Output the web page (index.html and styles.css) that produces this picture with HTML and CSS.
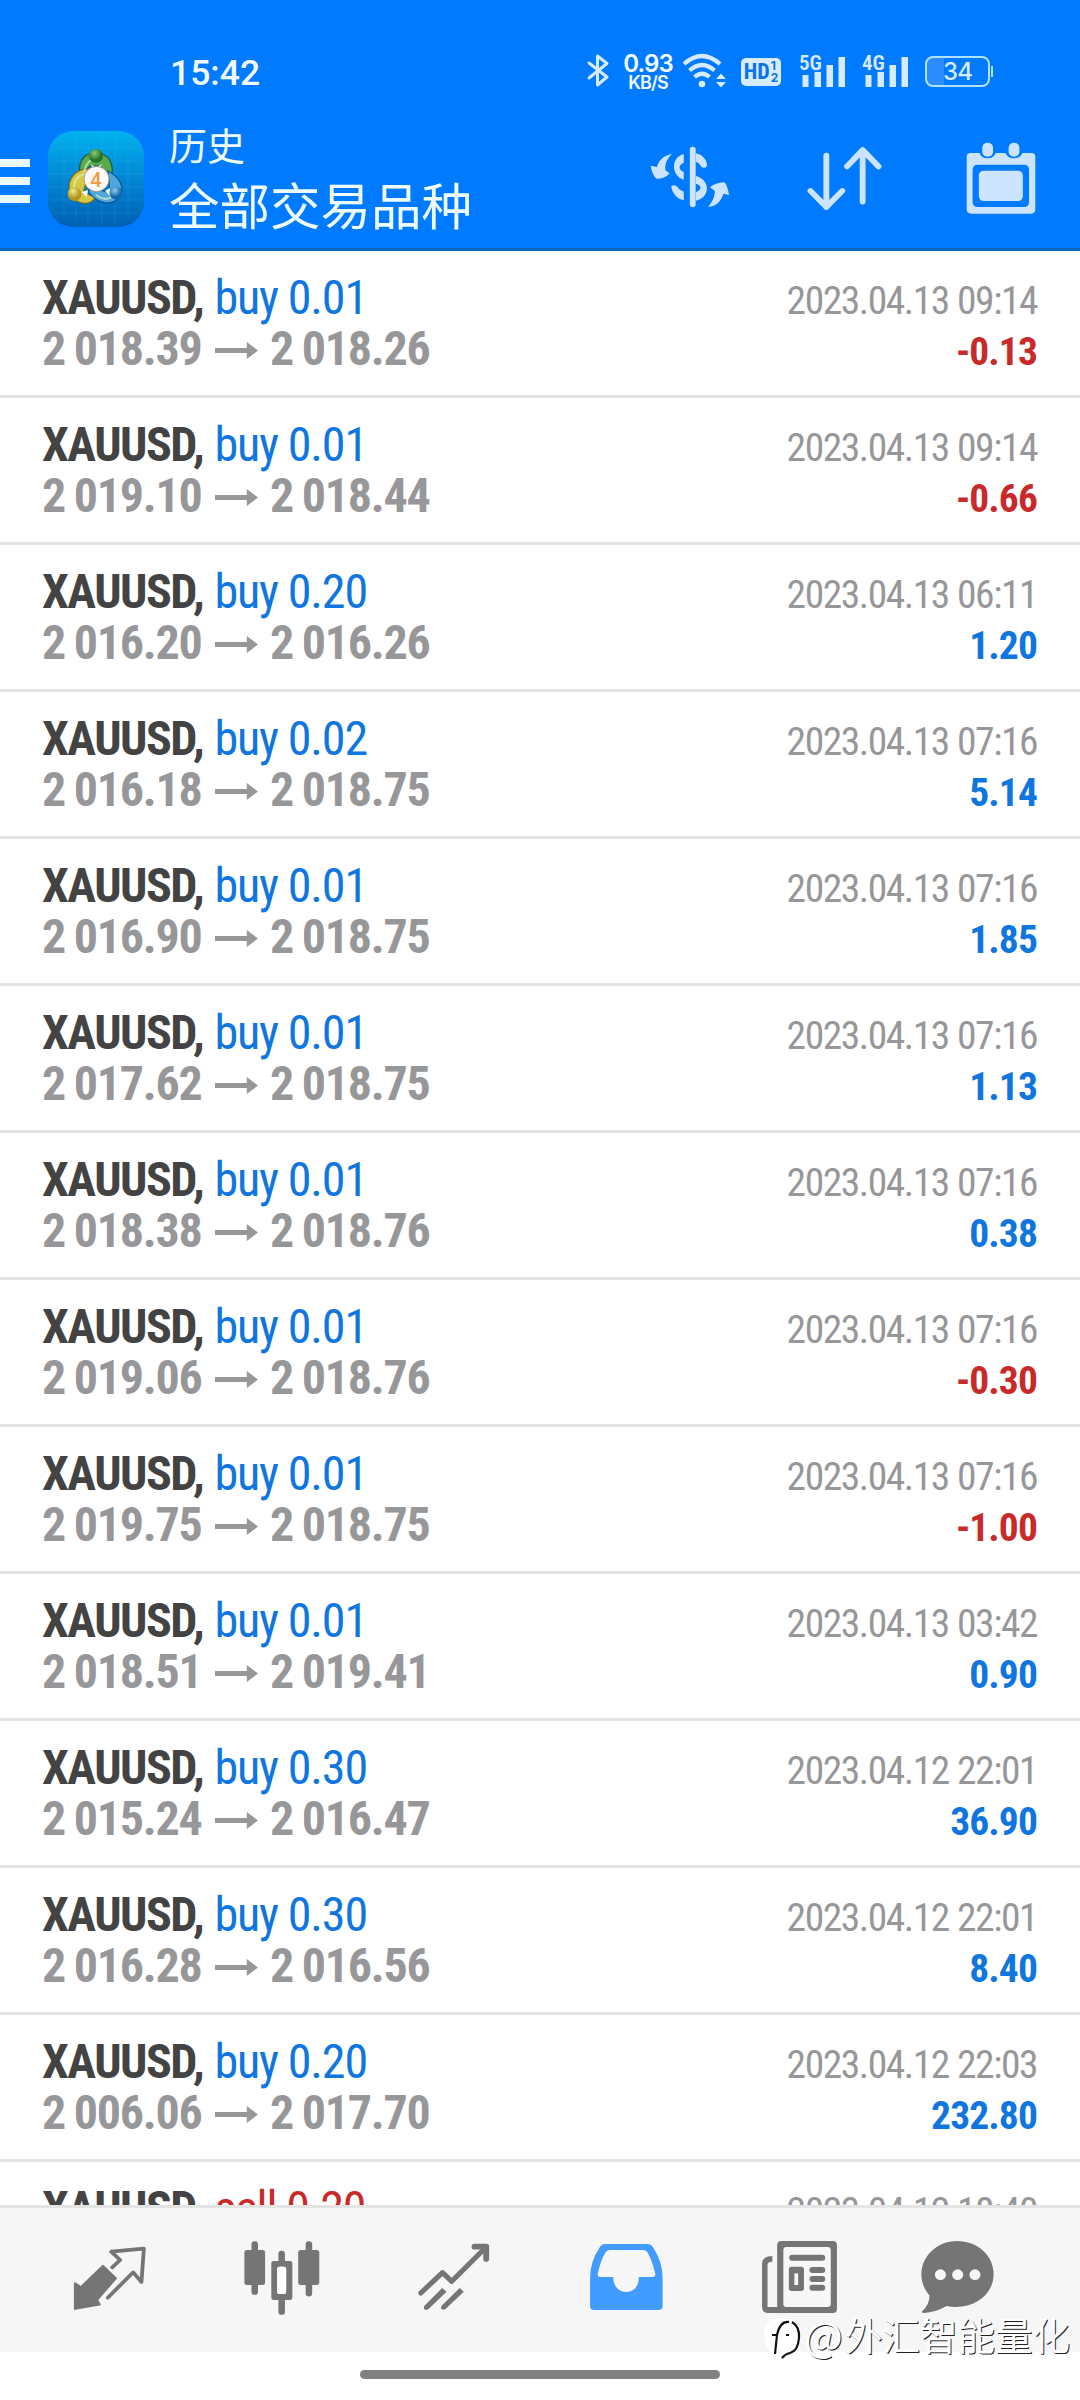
FILE: index.html
```html
<!DOCTYPE html>
<html lang="zh-CN">
<head>
<meta charset="utf-8">
<title>历史</title>
<link rel="stylesheet" href="styles.css">
</head>
<body>
<div class="screen">
  <header class="header">
    <div class="status">
      <span class="clock">15:42</span>
      <svg class="bt" viewBox="0 0 22 33"><path d="M2 9 20 23 10.500 31V2L20 9.500 2 24" /></svg>
      <div class="speed"><span>0.93</span><small>KB/S</small></div>
      <svg class="wifi" viewBox="0 0 46 34"><path d="M2 10Q20 -6 38 10M7.500 16.500Q20 5.500 32.500 16.500M12.500 23Q20 16.500 27.500 23"/><circle cx="20" cy="30" r="3.300"/><path class="solid" d="M39 19.500 44 25H34ZM34 28H44L39 33.500Z"/></svg>
      <div class="hd"><b>HD</b><span><i>1</i><i>2</i></span></div>
      <div class="signal"><b>5G</b><svg viewBox="0 0 47 32"><path d="M3.500 20h6v12h-6zM15.500 17h6.500v15h-6.500zM27.500 10h6.500v22h-6.500zM39.500 2h6.500v30h-6.500z"/></svg></div>
      <div class="signal second"><b>4G</b><svg viewBox="0 0 47 32"><path d="M3.500 20h6v12h-6zM15.500 17h6.500v15h-6.500zM27.500 10h6.500v22h-6.500zM39.500 2h6.500v30h-6.500z"/></svg></div>
      <div class="battery"><span>34</span></div>
      <i class="battery-tip"></i>
    </div>
    <div class="toolbar">
      <div class="burger"><i></i><i></i><i></i></div>
      <svg class="logo" viewBox="0 0 96 96">
        <defs>
          <linearGradient id="sky" x1="0" y1="0" x2="0" y2="1"><stop offset="0" stop-color="#00b2ef"/><stop offset=".5" stop-color="#0286d4"/><stop offset="1" stop-color="#0060b2"/></linearGradient>
          <radialGradient id="green" cx=".4" cy=".3"><stop offset="0" stop-color="#8fc66b"/><stop offset="1" stop-color="#24752f"/></radialGradient>
          <radialGradient id="gold" cx=".4" cy=".3"><stop offset="0" stop-color="#f6e88a"/><stop offset="1" stop-color="#b0951c"/></radialGradient>
          <radialGradient id="blue" cx=".4" cy=".3"><stop offset="0" stop-color="#8fccf2"/><stop offset="1" stop-color="#1668ae"/></radialGradient>
        </defs>
        <rect width="96" height="96" rx="25" fill="url(#sky)"/>
        <path d="M16 10V86M28 4V92M40 0V96M54 0V96M67 3V93M80 9V87M6 17H90M2 30H94M0 43H96M0 56H96M2 69H94M6 82H90" stroke="#5cc8f5" stroke-opacity=".15"/>
        <g stroke-width="1.200">
          <path d="M32 44C29 24 42 22 48 22C61 22 67 34 63 46C62 52 58 54 55 50L53 35L42 35Z" fill="#5aa94f" stroke="#195a38"/>
          <path d="M42 38C28 37 21 47 21 57C23 69 33 75 43 71L49 66L35 62Z" fill="#d8c840" stroke="#706c28"/>
          <path d="M60 40C72 46 78 58 71 67C62 76 48 72 40 60L45 57L62 62Z" fill="#4fa7de" stroke="#0c508c"/>
          <path d="M36 41Q39 28 49 27M26 56Q27 44 38 43M48 64Q60 73 69 61" fill="none" stroke="#d8efbf" stroke-opacity=".7" stroke-width="2"/>
          <path d="m43 33 5 4 6-4-3 7h-6zM33 61l7-2-1 7zM62 57l-5 3 5 5z" fill="#f3f6ee"/>
          <circle cx="48" cy="25" r="7" fill="url(#green)"/><circle cx="26.500" cy="63" r="7" fill="url(#gold)"/><circle cx="68" cy="62" r="6.500" fill="url(#blue)"/>
          <circle cx="48.500" cy="48" r="12.500" fill="#fdfaf8" stroke="#9a8a78" stroke-width=".8"/>
        </g>
        <text x="48" y="55.500" class="four">4</text>
      </svg>
      <div class="titles"><div class="sub">历史</div><div class="main">全部交易品种</div></div>
      <svg class="swap" viewBox="320 318 232 186" preserveAspectRatio="none">
        <path class="ln" d="M444 329V493" stroke-width="17"/>
        <path d="M418 342V368C402 374 402 389 418 396V419C381 408 379 352 418 342ZM381 440Q390 431 400 441Q405 451 418 455V481Q389 474 381 440ZM453 340Q478 344 485 371Q487 384 476 383Q467 382 465 374Q461 367 453 366ZM453 408C495 419 497 472 453 482V456C471 449 471 436 453 431Z"/>
        <path d="M383 342C366 360 363 376 365 391L377 400Q362 418 339 416Q326 405 322 377L340 381C345 362 359 346 383 342ZM488 500C506 482 508 462 508 453L494 442Q508 428 536 427Q545 437 549 465L533 461C526 483 513 500 488 500Z"/>
      </svg>
      <svg class="sort" viewBox="780 318 217 194" preserveAspectRatio="none"><path class="ln" d="M836 347V500M790 452 836 500 882 452M941 484V330M896 379 941 330 987 379" stroke-width="17"/></svg>
      <svg class="cal" viewBox="1241 306 202 216" preserveAspectRatio="none"><path fill-rule="evenodd" d="M1243 350Q1243 339 1254 339H1280Q1285 355 1303 355Q1321 355 1327 339H1355Q1361 355 1379 355Q1397 355 1404 339H1430Q1441 339 1441 350V508Q1441 521 1428 521H1256Q1243 521 1243 508ZM1276 374Q1260 374 1260 390V486Q1260 501 1276 501H1408Q1423 501 1423 486V390Q1423 374 1408 374Z"/><rect x="1278" y="392" width="127" height="91" rx="14"/><rect x="1288" y="308" width="31" height="42" rx="15"/><rect x="1364" y="308" width="31" height="42" rx="15"/></svg>
    </div>
  </header>
  <main class="list">
    <div class="deal"><div class="line"><b>XAUUSD,</b><span class="op">buy 0.01</span><time>2023.04.13 09:14</time></div><div class="line price"><span>2 018.39</span><i class="arrow"></i><span>2 018.26</span><strong class="neg">-0.13</strong></div></div>
    <div class="deal"><div class="line"><b>XAUUSD,</b><span class="op">buy 0.01</span><time>2023.04.13 09:14</time></div><div class="line price"><span>2 019.10</span><i class="arrow"></i><span>2 018.44</span><strong class="neg">-0.66</strong></div></div>
    <div class="deal"><div class="line"><b>XAUUSD,</b><span class="op">buy 0.20</span><time>2023.04.13 06:11</time></div><div class="line price"><span>2 016.20</span><i class="arrow"></i><span>2 016.26</span><strong>1.20</strong></div></div>
    <div class="deal"><div class="line"><b>XAUUSD,</b><span class="op">buy 0.02</span><time>2023.04.13 07:16</time></div><div class="line price"><span>2 016.18</span><i class="arrow"></i><span>2 018.75</span><strong>5.14</strong></div></div>
    <div class="deal"><div class="line"><b>XAUUSD,</b><span class="op">buy 0.01</span><time>2023.04.13 07:16</time></div><div class="line price"><span>2 016.90</span><i class="arrow"></i><span>2 018.75</span><strong>1.85</strong></div></div>
    <div class="deal"><div class="line"><b>XAUUSD,</b><span class="op">buy 0.01</span><time>2023.04.13 07:16</time></div><div class="line price"><span>2 017.62</span><i class="arrow"></i><span>2 018.75</span><strong>1.13</strong></div></div>
    <div class="deal"><div class="line"><b>XAUUSD,</b><span class="op">buy 0.01</span><time>2023.04.13 07:16</time></div><div class="line price"><span>2 018.38</span><i class="arrow"></i><span>2 018.76</span><strong>0.38</strong></div></div>
    <div class="deal"><div class="line"><b>XAUUSD,</b><span class="op">buy 0.01</span><time>2023.04.13 07:16</time></div><div class="line price"><span>2 019.06</span><i class="arrow"></i><span>2 018.76</span><strong class="neg">-0.30</strong></div></div>
    <div class="deal"><div class="line"><b>XAUUSD,</b><span class="op">buy 0.01</span><time>2023.04.13 07:16</time></div><div class="line price"><span>2 019.75</span><i class="arrow"></i><span>2 018.75</span><strong class="neg">-1.00</strong></div></div>
    <div class="deal"><div class="line"><b>XAUUSD,</b><span class="op">buy 0.01</span><time>2023.04.13 03:42</time></div><div class="line price"><span>2 018.51</span><i class="arrow"></i><span>2 019.41</span><strong>0.90</strong></div></div>
    <div class="deal"><div class="line"><b>XAUUSD,</b><span class="op">buy 0.30</span><time>2023.04.12 22:01</time></div><div class="line price"><span>2 015.24</span><i class="arrow"></i><span>2 016.47</span><strong>36.90</strong></div></div>
    <div class="deal"><div class="line"><b>XAUUSD,</b><span class="op">buy 0.30</span><time>2023.04.12 22:01</time></div><div class="line price"><span>2 016.28</span><i class="arrow"></i><span>2 016.56</span><strong>8.40</strong></div></div>
    <div class="deal"><div class="line"><b>XAUUSD,</b><span class="op">buy 0.20</span><time>2023.04.12 22:03</time></div><div class="line price"><span>2 006.06</span><i class="arrow"></i><span>2 017.70</span><strong>232.80</strong></div></div>
    <div class="deal"><div class="line"><b>XAUUSD,</b><span class="op sell">sell 0.20</span><time>2023.04.12 18:40</time></div></div>
  </main>
  <nav class="nav">
    <svg style="width:76px" viewBox="210 300 221 225" preserveAspectRatio="none"><path d="M300 378 337 415 282 480 290 493 219 506V430L236 442Z" stroke="#757575" stroke-width="7" stroke-linejoin="round"/><path class="ln" d="M327 382 350 360 324 335 419 326 412 426 388 397 314 473" stroke-width="11"/></svg>
    <svg style="width:78px" viewBox="705 300 226 225" preserveAspectRatio="none"><rect x="709" y="330" width="60" height="105" rx="7"/><rect x="865" y="330" width="61" height="105" rx="7"/><path class="ln" d="M739 313V455M896 313V460M817 342V365M817 480V515" stroke-width="19"/><path fill-rule="evenodd" d="M794 363H841Q848 363 848 370V473Q848 480 841 480H794Q787 480 787 473V370Q787 363 794 363ZM804 387V455Q804 462 811 462H823Q830 462 830 455V387Q830 380 823 380H811Q804 380 804 387Z"/><rect x="804" y="380" width="26" height="82" rx="6" fill="#fff"/></svg>
    <svg style="width:74px" viewBox="1210 300 215 225" preserveAspectRatio="none"><path class="ln" d="M1221 459 1284 398 1311 424 1409 323" stroke-width="15"/><path class="ln" d="M1377 320H1411V357" stroke-width="17"/><path d="M1231 498 1283 444 1296 455 1243 508Q1235 512 1230 506ZM1281 498 1334 444 1346 455 1292 508Q1284 512 1279 505Z"/></svg>
    <svg style="width:76px" viewBox="140 300 220 225" preserveAspectRatio="none"><path fill="#429bff" d="M190 312H312Q322 312 328 322Q356 365 356 415V498Q356 510 344 510H158Q146 510 146 498V415Q146 365 174 322Q180 312 190 312Z"/><path fill="#f7f7f7" d="M203 330H300Q309 330 313 338Q325 360 335 401Q336 410 328 411H287C290 471 212 471 213 411H176Q167 410 168 401Q177 360 190 338Q194 330 203 330Z"/></svg>
    <svg style="width:79px" viewBox="640 300 230 225" preserveAspectRatio="none"><path d="M690 510V315Q690 303 702 303H852Q864 303 864 315V507Q864 519 852 519H664Q646 519 646 501V372Q646 348 676 348V365Q662 365 662 374V501H690Z"/><rect x="708" y="321" width="138" height="180" rx="9" fill="#f7f7f7"/><path class="ln" d="M734 353H821M793 390H821M793 417H821M793 443H821" stroke-width="18"/><rect x="724" y="380" width="44" height="73" rx="8"/><path fill="#f7f7f7" d="M740 400h11v35h-11z"/></svg>
    <svg style="width:75px" viewBox="1105 300 217 225" preserveAspectRatio="none"><path d="M1213 303C1270 303 1318 345 1318 402C1318 470 1252 512 1182 498Q1150 517 1116 519Q1108 519 1112 513Q1134 491 1132 466C1077 398 1127 303 1213 303Z"/><g fill="#f7f7f7"><circle cx="1164" cy="404" r="16"/><circle cx="1214" cy="404" r="16"/><circle cx="1264" cy="404" r="16"/></g></svg>
  </nav>
  <div class="gesture"><i></i></div>
  <div class="watermark">
    <svg viewBox="0 0 40 46"><path fill="#fff" d="M1 14Q4 3 19 3Q38 4 38 20Q38 36 25 43L14 42Q0 35 1 14Z"/><path d="M9 20H14Q17 6 26 7M14 20 12 39M29 7Q37 12 36 23Q35 36 27 38Q22 39 19 43M23 20h3" /></svg><span class="at">@</span><span>外汇智能量化</span>
  </div>
</div>
</body>
</html>
```
FILE: styles.css
```css
* { box-sizing: border-box; }
body { margin: 0; background: #fff; }
i { font-style: normal; display: block; }
svg { display: block; flex: none; overflow: visible; }
.screen { position: relative; width: 1080px; height: 2400px; overflow: hidden; display: flex; flex-direction: column; font-family: "Roboto Condensed", Roboto, "Noto Sans CJK SC", sans-serif; }

.header { height: 251px; background: #007aff; border-bottom: 3px solid #1168c4; color: #fff; flex: none; }
.status { display: flex; align-items: flex-start; height: 120px; padding: 50px 0 0 170px; color: #d6ebff; }
.clock { width: 417px; margin-top: 2px; font: 500 35.500px/42px Roboto, sans-serif; color: #f2fbff; }
.bt { width: 22px; height: 33px; margin-top: 4px; fill: none; stroke: #d6ebff; stroke-width: 3; stroke-linejoin: round; stroke-linecap: round; }
.speed { width: 50px; margin: 3px 0 0 14px; display: flex; flex-direction: column; align-items: center; color: #f2fbff; font-family: Inter, sans-serif; font-weight: 600; }
.speed span { font-size: 24px; line-height: 21px; letter-spacing: -.9px; }
.speed small { font-size: 18px; line-height: 18px; letter-spacing: -.9px; }
.wifi { width: 46px; height: 34px; margin: 4px 0 0 9px; fill: none; stroke: #d6ebff; stroke-width: 4.200; stroke-linecap: butt; }
.wifi circle, .wifi .solid { fill: #d6ebff; stroke: none; }
.hd { width: 40px; height: 28px; margin: 8px 0 0 13px; border-radius: 5px; background: #d6ebff; color: #0874e8; display: flex; align-items: center; justify-content: center; gap: 1px; }
.hd b { font-size: 22px; line-height: 28px; }
.hd span { font: 700 12px/12px Inter, sans-serif; }
.signal { display: flex; width: 47px; height: 34px; margin: 4px 0 0 18px; position: relative; }
.signal b { position: absolute; left: 0; top: -1px; font-size: 21px; line-height: 20px; font-weight: 600; }
.signal svg { width: 47px; height: 32px; margin-top: 1px; fill: #d6ebff; }
.signal.second { margin-left: 16px; }
.battery { width: 65px; height: 31px; margin: 6px 0 0 16px; border: 2px solid #aee0ff; border-radius: 8px; background: linear-gradient(90deg, #2b8dff 17px, transparent 17px); font: 500 24px/27px Inter, sans-serif; text-align: center; letter-spacing: -1px; }
.battery-tip { width: 2px; height: 11px; margin: 16px 0 0 1px; background: #aee0ff; }

.toolbar { display: flex; height: 128px; align-items: flex-start; fill: #cce4ff; }
.burger { width: 30px; padding-top: 39px; display: flex; flex-direction: column; gap: 10px; flex: none; }
.burger i { height: 8px; background: #e9faff; }
.logo { width: 96px; height: 96px; margin: 11px 0 0 18px; }
.four { font: 500 20px Roboto, sans-serif; fill: #f39a3d; text-anchor: middle; }
.titles { flex: none; width: 506px; margin-top: -4px; padding-left: 25px; font-family: "Noto Sans CJK SC", sans-serif; font-weight: 400; color: #eefbff; white-space: nowrap; }
.sub { font-size: 38px; line-height: 55px; }
.main { font-size: 50.500px; line-height: 65px; }
.ln { fill: none; stroke: #cce4ff; stroke-linecap: round; stroke-linejoin: round; }
.swap { width: 80px; height: 62px; margin-top: 26px; }
.sort { width: 75px; height: 65px; margin: 26px 0 0 77px; }
.cal { width: 70px; height: 72px; margin: 22px 0 0 84px; }

.list { height: 1954px; overflow: hidden; flex: none; }
.deal { height: 147px; padding: 21px 43px 0 42px; border-bottom: 3px solid #e4e4e4; }
.line { display: flex; align-items: baseline; height: 51px; font-size: 48px; line-height: 51px; white-space: nowrap; }
.line b { flex: none; width: 172.500px; color: #434343; letter-spacing: -1.500px; }
.op { color: #0f76e0; letter-spacing: -1.150px; }
.op.sell { color: #c82a2a; }
time { margin-left: auto; font-size: 39.500px; color: #97979a; letter-spacing: -1.450px; word-spacing: 0.500px; }
.price span { flex: none; color: #97979a; font-weight: 700; width: 159px; letter-spacing: -1.250px; word-spacing: -1px; }
.arrow { flex: none; width: 43px; height: 17px; margin: 0 12px 0 14px; background: #97979a; clip-path: polygon(0 35%, 74% 35%, 74% 0, 100% 50%, 74% 100%, 74% 65%, 0 65%); align-self: flex-start; margin-top: 19px; }
.price strong { margin-left: auto; font-size: 39.500px; color: #0f76e0; letter-spacing: -.900px; }
.price .neg { color: #c82a2a; }

.nav { height: 147px; background: #f6f6f6; border-top: 3px solid #e4e4e4; padding: 32px 0 0 72px; display: grid; grid-template-columns: 171px 174px 171px 172px 160px 76px; fill: #757575; flex: none; }
.nav svg { height: 75px; }
.nav .ln { stroke: #757575; }
.gesture { padding: 18px 360px 0; }
.gesture i { height: 9px; border-radius: 5px; background: #808080; }
.watermark { position: absolute; left: 763px; top: 2315px; display: flex; align-items: flex-start; color: #fff; font: 400 37.500px/38px "Noto Sans CJK SC", sans-serif; text-shadow: 1px 1px 0 #222; white-space: nowrap; }
.watermark svg { width: 40px; height: 46px; fill: none; stroke: #111; stroke-width: 2.200; }
.watermark svg path:first-child { stroke: none; }
.at { width: 41px; margin-left: 1px; font-size: 41px; }
```
